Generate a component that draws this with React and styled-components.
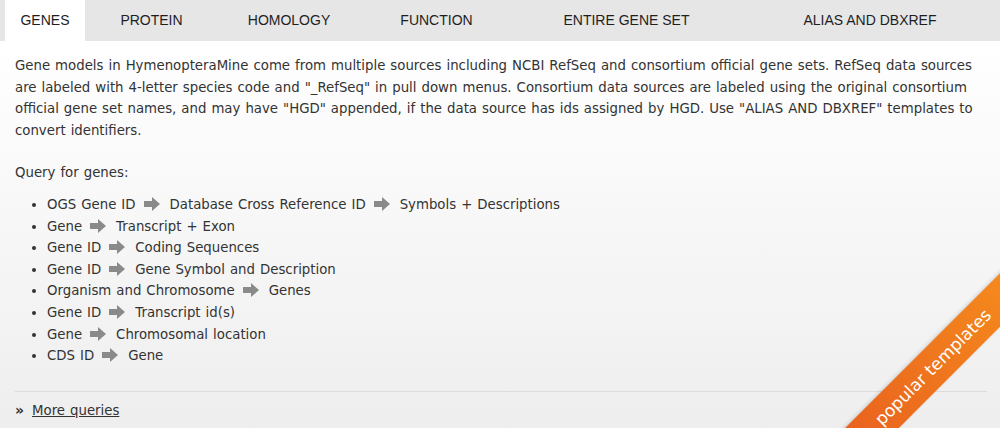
import styled, { createGlobalStyle } from 'styled-components'

const GlobalStyle = createGlobalStyle`
  body {
    margin: 0;
    background: #fff;
  }
`

const tabs = [
  { label: 'GENES', width: 80 },
  { label: 'PROTEIN', width: 133 },
  { label: 'HOMOLOGY', width: 142 },
  { label: 'FUNCTION', width: 153 },
  { label: 'ENTIRE GENE SET', width: 227 },
  { label: 'ALIAS AND DBXREF', width: 260 },
]

const queries = [
  ['OGS Gene ID', 'Database Cross Reference ID', 'Symbols + Descriptions'],
  ['Gene', 'Transcript + Exon'],
  ['Gene ID', 'Coding Sequences'],
  ['Gene ID', 'Gene Symbol and Description'],
  ['Organism and Chromosome', 'Genes'],
  ['Gene ID', 'Transcript id(s)'],
  ['Gene', 'Chromosomal location'],
  ['CDS ID', 'Gene'],
]

const Arrow = () => (
  <ArrowIcon width="16" height="14" viewBox="0 0 16 14">
    <path d="M0 4 H8 V0 L16 7 L8 14 V10 H0 Z" fill="#8a8a8a" />
  </ArrowIcon>
)

const App = () => {
  return (
    <Page>
      <GlobalStyle />
      <TabBar>
        {tabs.map((t, i) => (
          <Tab key={t.label} $width={t.width} $active={i === 0}>
            {t.label}
          </Tab>
        ))}
      </TabBar>
      <Content>
        <Intro>
          Gene models in HymenopteraMine come from multiple sources including NCBI RefSeq and
          consortium official gene sets. RefSeq data sources are labeled with 4-letter species code
          and "_RefSeq" in pull down menus. Consortium data sources are labeled using the original
          consortium official gene set names, and may have "HGD" appended, if the data source has
          ids assigned by HGD. Use "ALIAS AND DBXREF" templates to convert identifiers.
        </Intro>
        <Heading>Query for genes:</Heading>
        <QueryList>
          {queries.map((q, i) => (
            <QueryItem key={i}>
              {q.map((part, j) => (
                <span key={j}>
                  {j > 0 && <Arrow />}
                  {part}
                </span>
              ))}
            </QueryItem>
          ))}
        </QueryList>
        <Footer>
          <Chevrons>»</Chevrons>
          <MoreLink href="#">More queries</MoreLink>
        </Footer>
        <Ribbon>popular templates</Ribbon>
      </Content>
    </Page>
  )
}

export default App

const Page = styled.div`
  width: 1000px;
  height: 428px;
  overflow: hidden;
  display: flex;
  flex-direction: column;
  font-family: "DejaVu Sans", Verdana, sans-serif;
  color: #333;
`

const TabBar = styled.div`
  display: flex;
  height: 41px;
  flex-shrink: 0;
  background: #e6e6e6;
  padding-left: 5px;
`

const Tab = styled.div`
  width: ${p => p.$width}px;
  flex-shrink: 0;
  text-align: center;
  line-height: 41px;
  font-family: "Liberation Sans", Arial, sans-serif;
  font-size: 14px;
  color: #1e1e1e;
  background: ${p => (p.$active ? '#fff' : 'transparent')};
`

const Content = styled.div`
  position: relative;
  flex: 1;
  overflow: hidden;
  padding: 14px 13px 0 15px;
  background: linear-gradient(#ffffff, #eeeeee);
  font-size: 13.3px;
  word-spacing: 0.8px;
  line-height: 21.6px;
`

const Intro = styled.p`
  margin: 0;
`

const Heading = styled.p`
  margin: 21px 0 0;
`

const QueryList = styled.ul`
  margin: 10px 0 0;
  padding-left: 32px;
`

const QueryItem = styled.li`
  white-space: nowrap;
`

const ArrowIcon = styled.svg`
  vertical-align: -2px;
  margin: 0 10px 0 8px;
`

const Footer = styled.div`
  margin-top: 24px;
  border-top: 1px solid #dcdcdc;
  padding-top: 8px;
  display: flex;
  align-items: center;
  gap: 8px;
`

const Chevrons = styled.span`
  font-weight: bold;
  font-size: 14px;
`

const MoreLink = styled.a`
  color: #333;
  text-decoration: underline;
`

const Ribbon = styled.div`
  position: absolute;
  left: 723px;
  top: 307px;
  width: 420px;
  height: 38px;
  transform: rotate(-45deg);
  background: linear-gradient(to right, #e4501f, #fa9b1c);
  box-shadow: 0 -1px 4px rgba(0, 0, 0, 0.15);
  color: #fff;
  font-size: 17px;
  word-spacing: 0;
  line-height: 38px;
  text-align: center;
`
